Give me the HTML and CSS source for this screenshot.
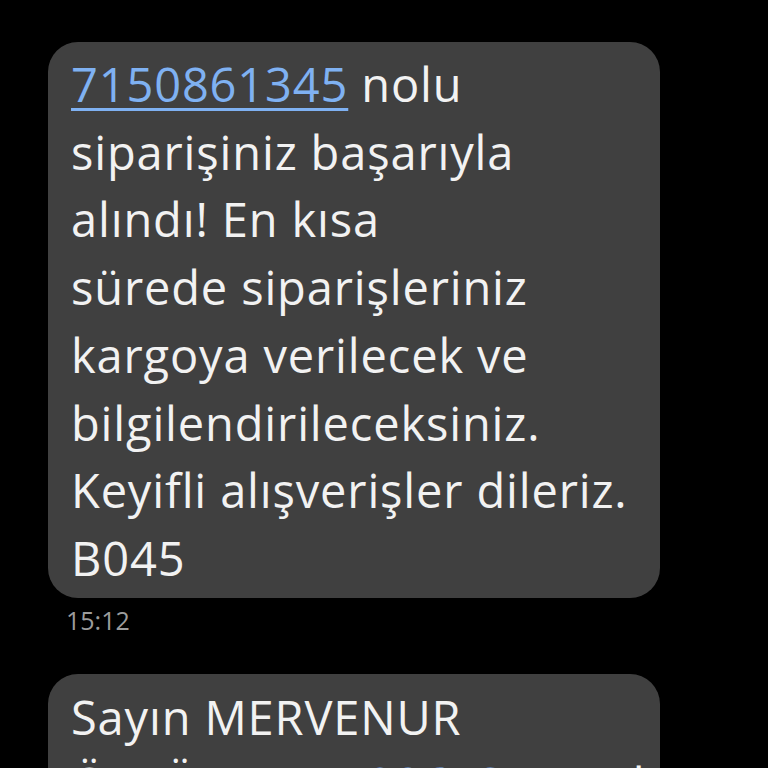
FILE: index.html
```html
<!DOCTYPE html>
<html lang="tr">
<head>
<meta charset="utf-8">
<link rel="stylesheet" href="styles.css">
</head>
<body>
<div class="thread">
  <div class="msg">
    <div class="bubble">
      <div class="text"><a class="link">7150861345</a> nolu<br>siparişiniz başarıyla<br>alındı! En kısa<br>sürede siparişleriniz<br>kargoya verilecek ve<br>bilgilendirileceksiniz.<br>Keyifli alışverişler dileriz.<br>B045</div>
    </div>
    <div class="time">15:12</div>
  </div>
  <div class="msg">
    <div class="bubble bubble-next">
      <div class="text">Sayın MERVENUR<br>ÖZTÜRK, <a class="link">7150861345</a> nolu</div>
    </div>
  </div>
</div>
</body>
</html>
```
FILE: styles.css
```css
html, body {
  margin: 0;
  padding: 0;
  background: #000;
  height: 768px;
  overflow: hidden;
}
.thread {
  display: flex;
  flex-direction: column;
  gap: 37px;
  padding: 42px 0 0 48px;
}
.msg {
  display: flex;
  flex-direction: column;
}
.bubble {
  width: 612px;
  box-sizing: border-box;
  background: #404040;
  border-radius: 30px;
  padding: 9px 20px 5px 23px;
}
.bubble-next {
  padding-top: 10px;
}
.text {
  font-family: "Open Sans", "Noto Sans", sans-serif;
  font-size: 47px;
  line-height: 67.7px;
  letter-spacing: 0.85px;
  color: #f2f2f2;
  white-space: nowrap;
}
.link {
  color: #7fb1f2;
  text-decoration: underline;
  text-decoration-thickness: 3px;
  text-underline-offset: 6px;
}
.time {
  font-family: "Open Sans", "Noto Sans", sans-serif;
  font-size: 25px;
  line-height: 34px;
  color: #9c9c9c;
  margin: 5px 0 0 18px;
}
```
